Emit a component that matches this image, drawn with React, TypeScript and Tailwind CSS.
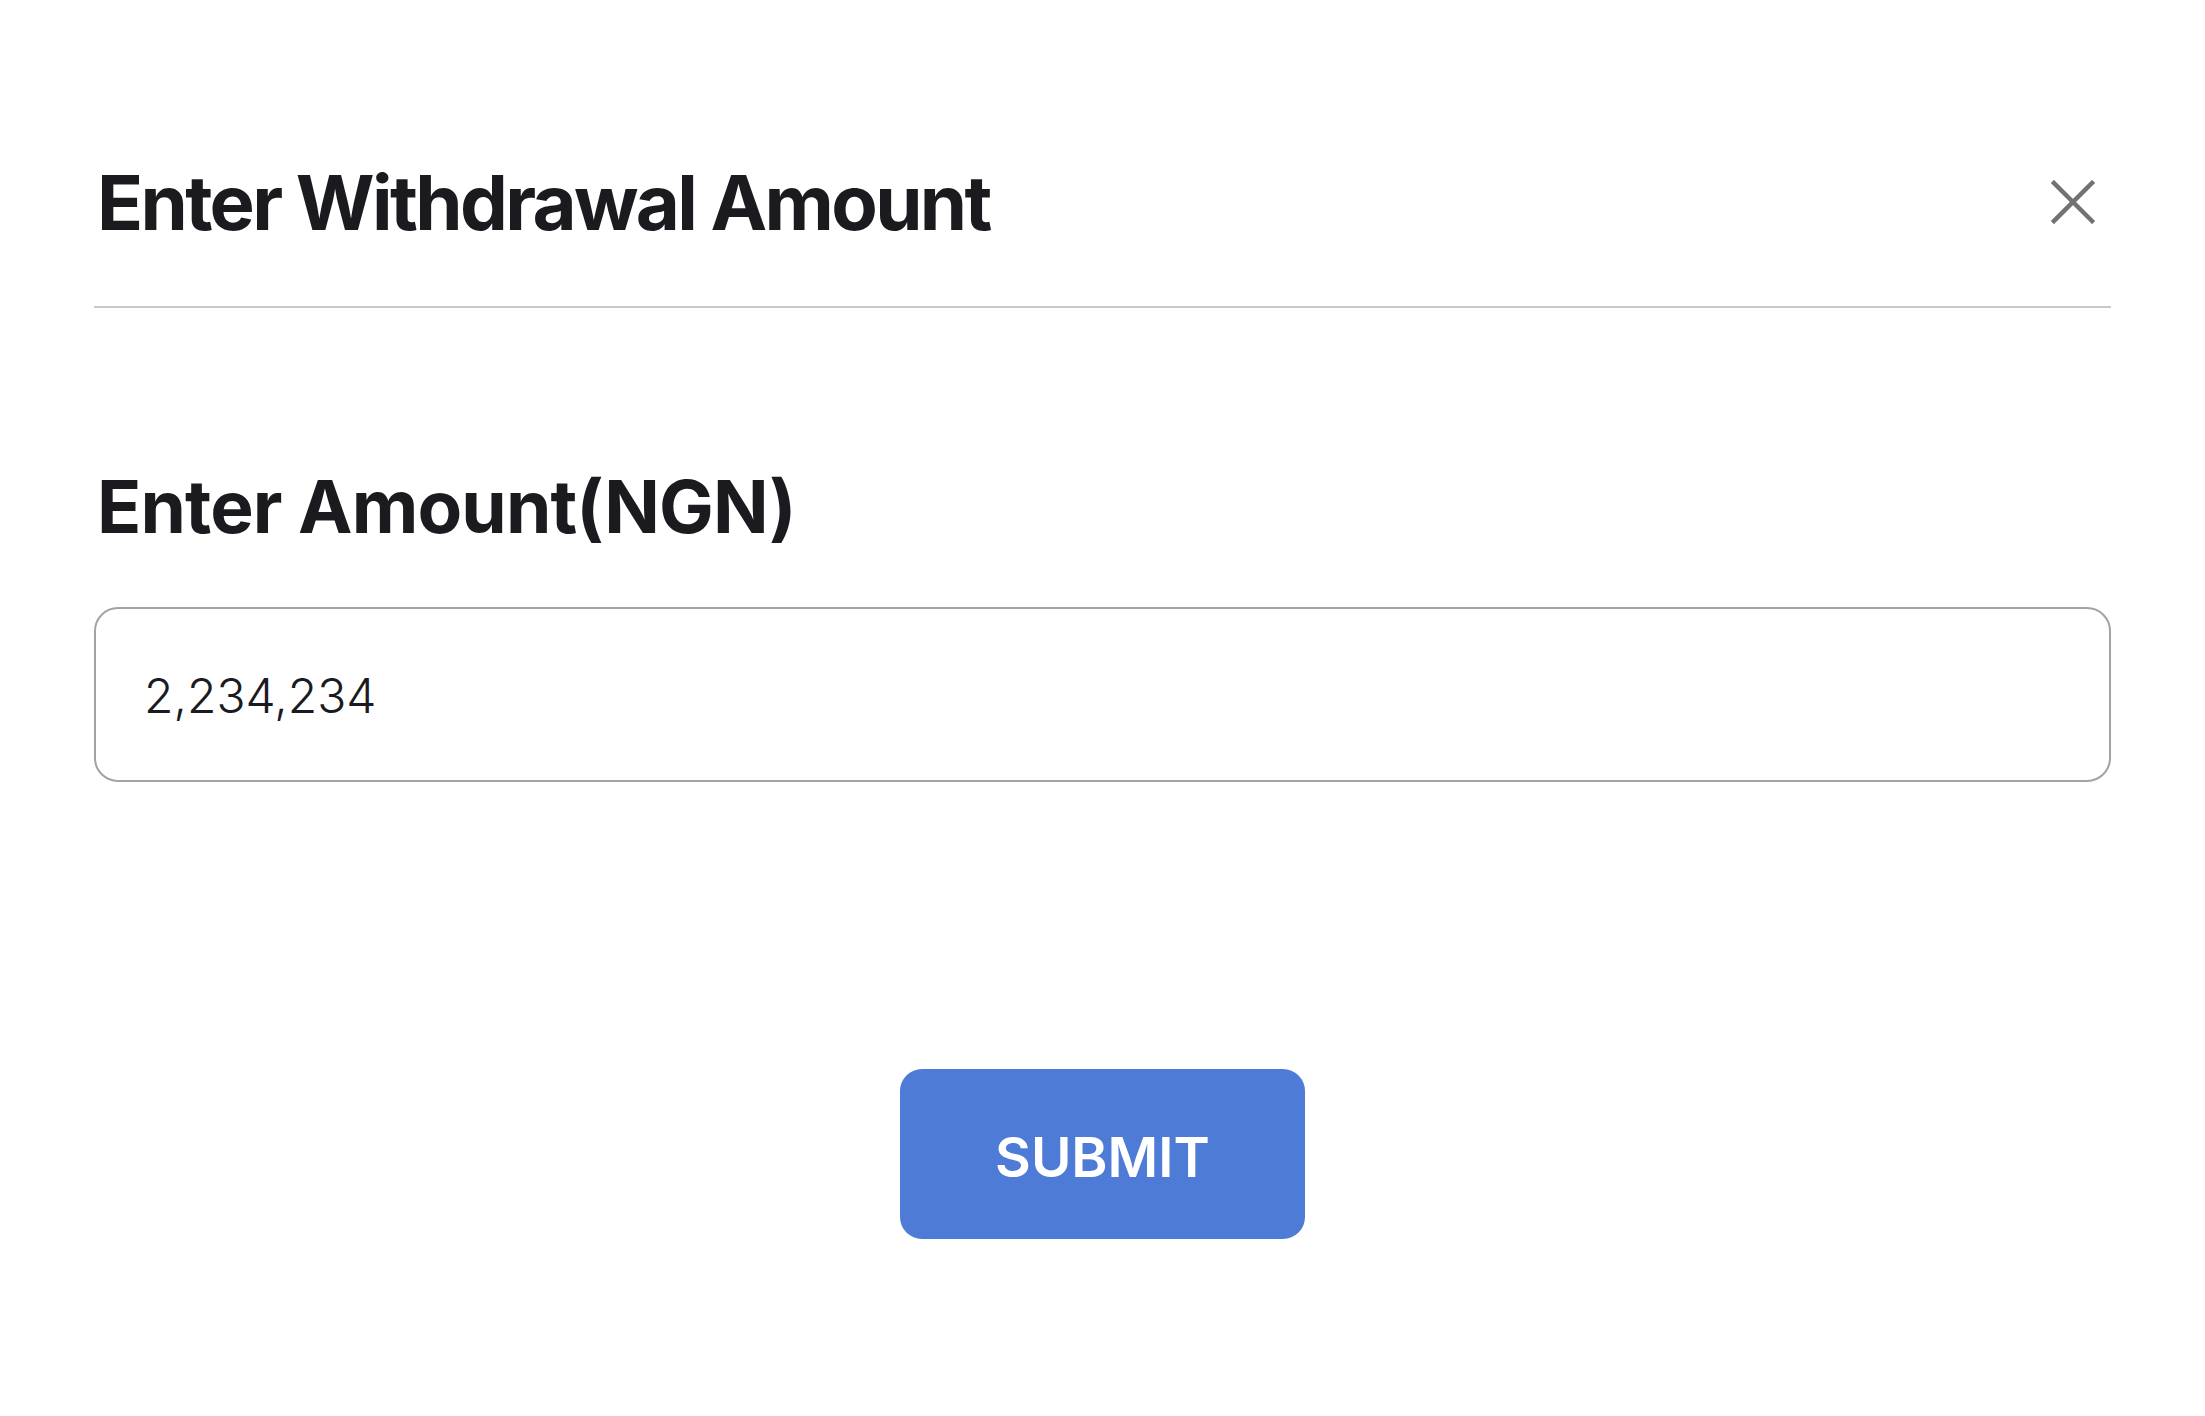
import React, { useState } from "react";

function CloseIcon() {
  return (
    <svg width="44" height="44" viewBox="0 0 44 44" fill="none">
      <path
        d="M3 3L41 41M41 3L3 41"
        stroke="#727272"
        strokeWidth="4.5"
        strokeLinecap="square"
      />
    </svg>
  );
}

export default function App() {
  const [amount, setAmount] = useState("2,234,234");

  return (
    <div
      className="min-h-[1416px] w-full bg-white px-[94px] text-[#1b1b1f]"
      style={{ fontFamily: "Inter, 'Noto Sans', sans-serif" }}
    >
      <div className="flex items-center justify-between pt-[164px]">
        <h2 className="ml-[3px] text-[76px] font-bold leading-none tracking-[-0.035em]">
          Enter Withdrawal Amount
        </h2>
        <button className="mr-[16px] flex items-center justify-center">
          <CloseIcon />
        </button>
      </div>
      <div className="mt-[66px] h-[2px] w-full bg-[#c8c8c8]" />

      <label className="mt-[162px] ml-[3px] block text-[73px] font-bold leading-none tracking-[-0.012em]">
        Enter Amount(NGN)
      </label>
      <input
        className="mt-[64px] box-border block h-[175px] w-full rounded-[24px] border-2 border-[#a3a3a3] pl-[48px] pt-[2px] text-[48px] font-light outline-none"
        value={amount}
        onChange={(e) => setAmount(e.target.value)}
      />

      <div className="mt-[287px] flex justify-center">
        <button className="h-[170px] w-[405px] rounded-[22px] bg-[#4e7bd6] pt-[6px] text-[55px] font-semibold text-white">
          SUBMIT
        </button>
      </div>
    </div>
  );
}
